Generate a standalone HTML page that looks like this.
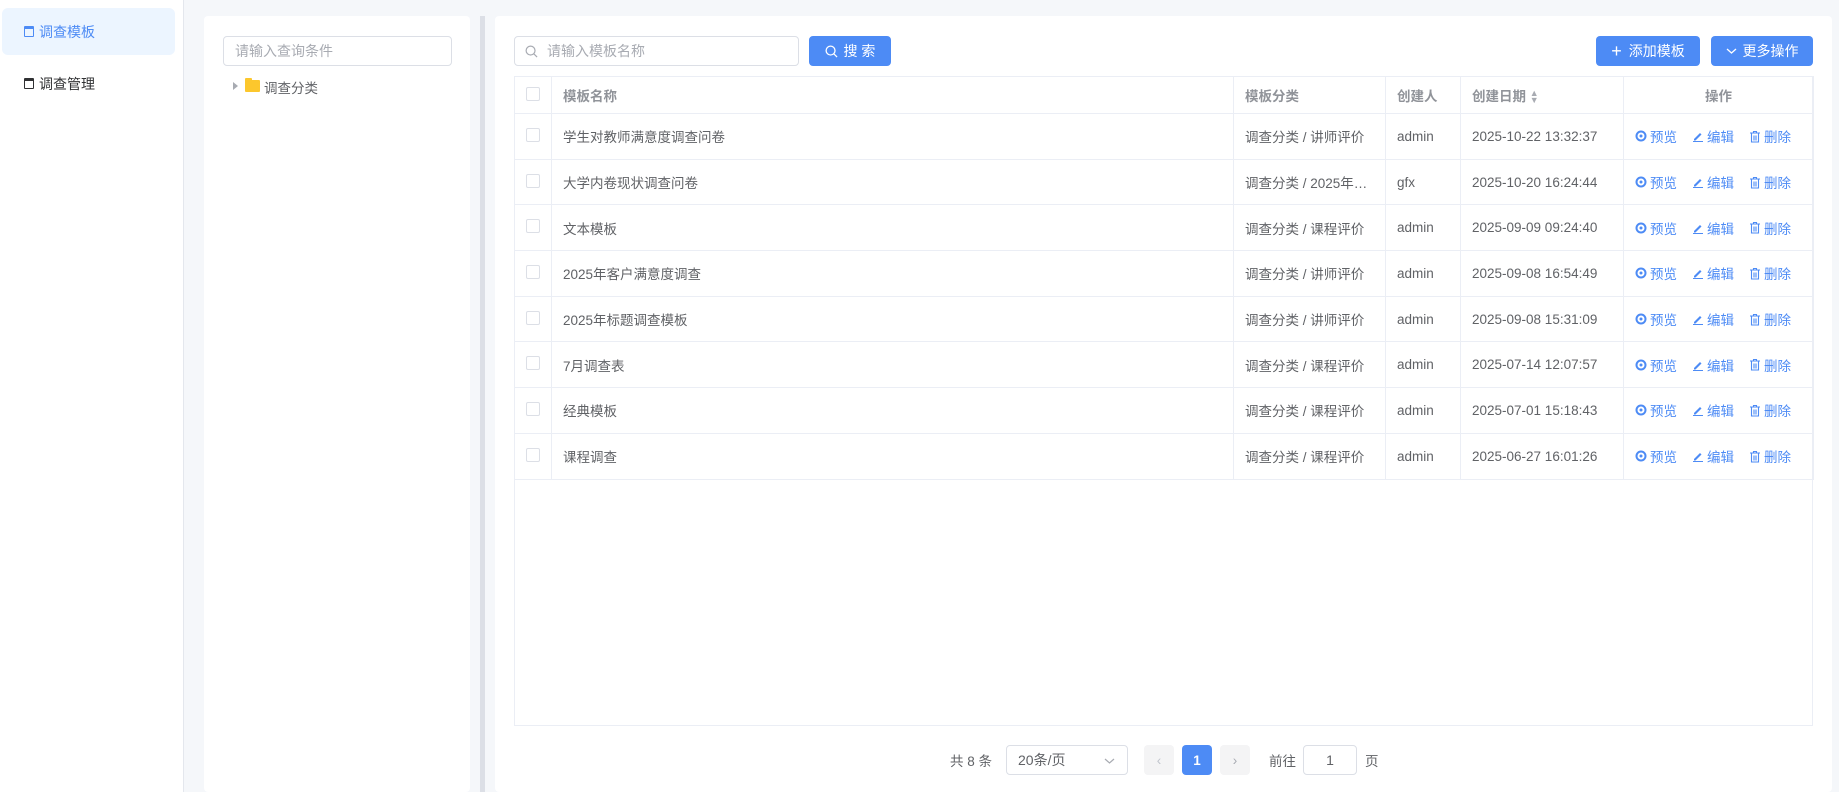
<!DOCTYPE html>
<html><head><meta charset="utf-8"><style>
*{box-sizing:border-box;margin:0;padding:0}
body{width:1839px;height:792px;overflow:hidden;background:#f5f7fa;font-family:"Liberation Sans","Noto Sans CJK SC",sans-serif;font-size:13.5px;color:#606266;position:relative}
.a{position:absolute}
.side{left:0;top:0;width:184px;height:792px;background:#fff;border-right:1px solid #e4e7ed}
.mi{left:2px;width:173px;height:47px;border-radius:6px;display:flex;align-items:center;padding-left:22px;font-size:14px}
.mi i{display:inline-block;width:10px;height:11px;border:1.5px solid currentColor;border-top-width:3px;border-radius:1px;margin-right:5px}
.panel{background:#fff;border-radius:4px}
.inp{border:1px solid #dcdfe6;border-radius:4px;background:#fff;color:#a8abb2;font-size:14px;display:flex;align-items:center}
.btn{background:#4d8bf5;color:#fff;border-radius:4px;display:flex;align-items:center;justify-content:center;font-size:14px}
table{border-collapse:collapse;position:absolute;left:514px;top:76px;width:1299px;table-layout:fixed}
td,th{border:1px solid #ebeef5;height:45.7px;padding:0 11px;text-align:left;font-weight:normal;white-space:nowrap;overflow:hidden;text-overflow:ellipsis}
th{height:37px;color:#909399;font-weight:bold}
.cb{display:inline-block;width:14px;height:14px;border:1px solid #dcdfe6;border-radius:2px;background:#fff}
td.op{color:#4d8bf5;overflow:visible;text-overflow:clip}
.op div{display:flex;align-items:center}
.op span{display:inline-flex;align-items:center}
.op svg{margin-right:3px}
.pg{top:745px;height:30px;display:flex;align-items:center;justify-content:center;border-radius:4px}
</style></head><body>
<div class="a side">
 <div class="a mi" style="top:8px;background:#ecf5ff;color:#4d8bf5"><i></i>调查模板</div>
 <div class="a mi" style="top:60px;color:#303133"><i></i>调查管理</div>
</div>
<div class="a panel" style="left:204px;top:16px;width:266px;height:776px">
 <div class="a inp" style="left:19px;top:20px;width:229px;height:30px;padding-left:11px">请输入查询条件</div>
 <div class="a" style="left:29px;top:66px;width:0;height:0;border-left:5px solid #a8abb2;border-top:4px solid transparent;border-bottom:4px solid transparent"></div>
 <div class="a" style="left:41px;top:64px;width:15px;height:12px;background:#fcc72d;border-radius:1px"></div>
 <div class="a" style="left:41px;top:62px;width:7px;height:3px;background:#fcc72d;border-radius:1px 1px 0 0"></div>
 <div class="a" style="left:60px;top:61px;color:#606266">调查分类</div>
</div>
<div class="a" style="left:480px;top:16px;width:5px;height:776px;background:#dcdfe6"></div>
<div class="a panel" style="left:495px;top:16px;width:1337px;height:776px"></div>
<div class="a inp" style="left:514px;top:36px;width:285px;height:30px;padding-left:10px"><svg width="13" height="13" viewBox="0 0 14 14" style="margin-right:9px"><circle cx="6" cy="6" r="4.8" fill="none" stroke="#a8abb2" stroke-width="1.3"/><path d="M9.5 9.5L13 13" stroke="#a8abb2" stroke-width="1.3"/></svg>请输入模板名称</div>
<div class="a btn" style="left:809px;top:36px;width:82px;height:30px"><svg width="13" height="13" viewBox="0 0 14 14" style="margin-right:6px"><circle cx="6" cy="6" r="4.8" fill="none" stroke="#fff" stroke-width="1.4"/><path d="M9.5 9.5L13 13" stroke="#fff" stroke-width="1.4"/></svg>搜 索</div>
<div class="a btn" style="left:1596px;top:36px;width:104px;height:30px"><span style="font-size:18px;margin-right:7px;font-weight:300">+</span>添加模板</div>
<div class="a btn" style="left:1711px;top:36px;width:102px;height:30px"><svg width="11" height="8" viewBox="0 0 11 8" style="margin-right:6px"><path d="M1 2l4.5 4L10 2" fill="none" stroke="#fff" stroke-width="1.3"/></svg>更多操作</div>
<div class="a" style="left:514px;top:76px;width:1299px;height:650px;border:1px solid #ebeef5;background:#fff"></div>
<table>
<colgroup><col style="width:37px"><col style="width:682px"><col style="width:152px"><col style="width:75px"><col style="width:163px"><col style="width:190px"></colgroup>
<tr><th><span class="cb"></span></th><th>模板名称</th><th>模板分类</th><th>创建人</th><th>创建日期 <span style="font-size:9px;color:#a8abb2;display:inline-block;line-height:7px;vertical-align:middle">▲<br>▼</span></th><th style="text-align:center">操作</th></tr>
<tbody id="tb"></tbody>
</table>
<script>
var d=[["学生对教师满意度调查问卷","调查分类 / 讲师评价","admin","2025-10-22 13:32:37"],["大学内卷现状调查问卷","调查分类 / 2025年度调查","gfx","2025-10-20 16:24:44"],["文本模板","调查分类 / 课程评价","admin","2025-09-09 09:24:40"],["2025年客户满意度调查","调查分类 / 讲师评价","admin","2025-09-08 16:54:49"],["2025年标题调查模板","调查分类 / 讲师评价","admin","2025-09-08 15:31:09"],["7月调查表","调查分类 / 课程评价","admin","2025-07-14 12:07:57"],["经典模板","调查分类 / 课程评价","admin","2025-07-01 15:18:43"],["课程调查","调查分类 / 课程评价","admin","2025-06-27 16:01:26"]];
var eye='<svg width="12" height="12" viewBox="0 0 12 12"><circle cx="6" cy="6" r="4.5" fill="none" stroke="#4d8bf5" stroke-width="2"/><circle cx="6" cy="6" r="1.5" fill="#4d8bf5"/></svg>';
var pen='<svg width="12" height="12" viewBox="0 0 12 12"><path d="M2 9l6-6 1.5 1.5-6 6H2z" fill="#4d8bf5"/><path d="M1 11.5h10" stroke="#4d8bf5"/></svg>';
var bin='<svg width="12" height="13" viewBox="0 0 12 13"><path d="M1 3h10M4.5 3V1.5h3V3M2.5 3.5v8.5h7V3.5M5 5.5v5M7 5.5v5" fill="none" stroke="#4d8bf5" stroke-width="1.1"/></svg>';
var h='';d.forEach(function(r){h+='<tr><td><span class="cb"></span></td><td>'+r[0]+'</td><td>'+r[1]+'</td><td>'+r[2]+'</td><td>'+r[3]+'</td><td class="op"><div><span>'+eye+'预览</span><span style="margin-left:15px">'+pen+'编辑</span><span style="margin-left:15px">'+bin+'删除</span></div></td></tr>'});
document.getElementById('tb').innerHTML=h;
</script>
<div class="a" style="left:950px;top:750px">共 8 条</div>
<div class="a inp" style="left:1006px;top:745px;width:122px;height:30px;padding-left:11px;color:#606266">20条/页<svg class="a" style="right:12px;top:11px" width="11" height="8" viewBox="0 0 11 8"><path d="M1 2l4.5 4L10 2" fill="none" stroke="#a8abb2" stroke-width="1.2"/></svg></div>
<div class="a pg" style="left:1144px;width:30px;background:#f4f4f5;color:#c0c4cc">‹</div>
<div class="a pg" style="left:1182px;width:30px;background:#4d8bf5;color:#fff;font-weight:bold">1</div>
<div class="a pg" style="left:1220px;width:30px;background:#f4f4f5;color:#a8abb2">›</div>
<div class="a" style="left:1269px;top:750px">前往</div>
<div class="a inp" style="left:1303px;top:745px;width:54px;height:30px;justify-content:center;color:#606266">1</div>
<div class="a" style="left:1365px;top:750px">页</div>
</body></html>
